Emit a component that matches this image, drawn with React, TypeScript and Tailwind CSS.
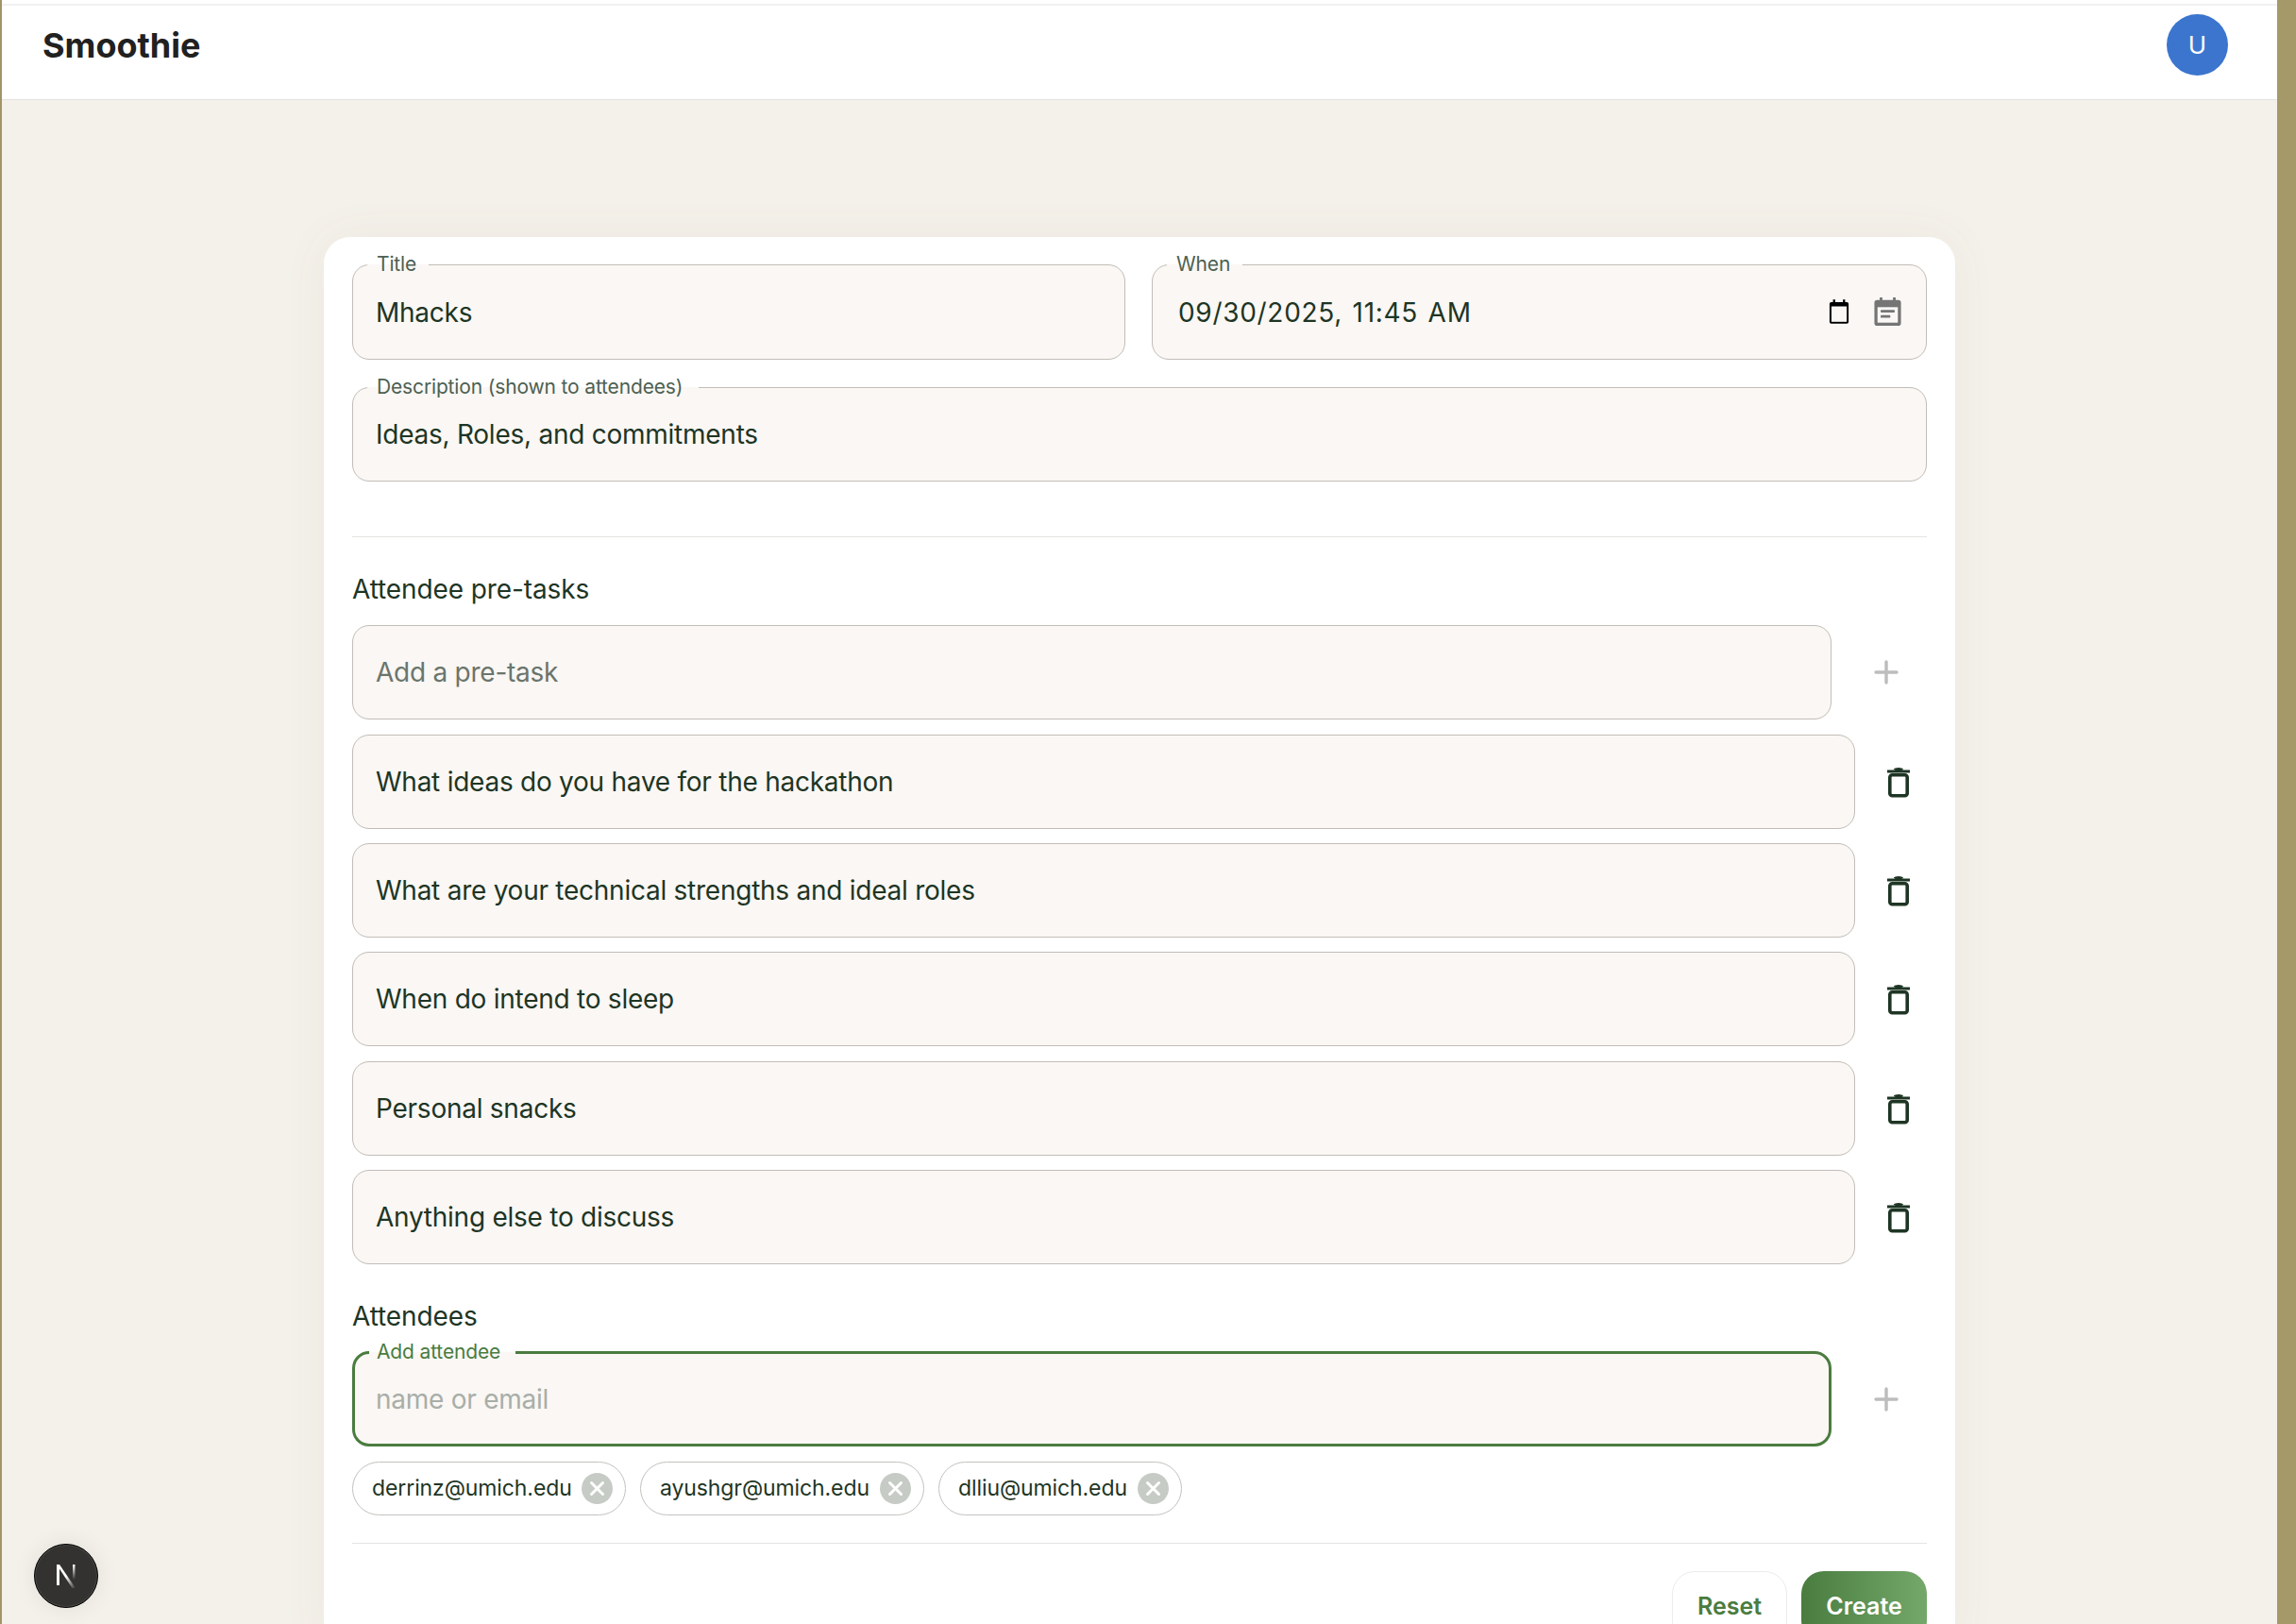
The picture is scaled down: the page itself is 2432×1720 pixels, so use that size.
import React from "react";

const tasks = [
  "What ideas do you have for the hackathon",
  "What are your technical strengths and ideal roles",
  "When do intend to sleep",
  "Personal snacks",
  "Anything else to discuss",
];

const attendees = [
  { email: "derrinz@umich.edu", width: "w-[290px]" },
  { email: "ayushgr@umich.edu", width: "w-[301px]" },
  { email: "dlliu@umich.edu", width: "w-[258px]" },
];

// Outlined box with a notched label, the way the MUI text field draws it
const Field: React.FC<{
  label?: string;
  focused?: boolean;
  className?: string;
  children: React.ReactNode;
}> = ({ label, focused, className = "", children }) => {
  const line = focused ? "border-[3px] border-[#4a7c3f]" : "border border-[#c2bdb8]";
  return (
    <div className={`relative flex items-center rounded-[18px] bg-[#faf7f4] px-[25px] text-[28px] tracking-[-0.25px] text-[#1e3524] ${className}`}>
      <fieldset className={`pointer-events-none absolute inset-x-0 bottom-0 m-0 min-w-0 rounded-[18px] p-0 pl-[15px] ${label ? "-top-[5px]" : "top-0"} ${line}`}>
        {label && (
          <legend className="invisible h-[11px] px-[11px] text-[21.5px] leading-[11px]">
            <span>{label}</span>
          </legend>
        )}
      </fieldset>
      {label && (
        <span className={`absolute left-[26px] top-[-14px] text-[21px] leading-[28px] tracking-[-0.15px] ${focused ? "text-[#4a7c3f]" : "text-[#4d6152]"}`}>
          {label}
        </span>
      )}
      {children}
    </div>
  );
};

const PlusIcon = () => (
  <svg width="28" height="28" viewBox="0 0 28 28" fill="none" stroke="#bdbdbd" strokeWidth="3.4" strokeLinecap="round">
    <path d="M14 3v22M3 14h22" />
  </svg>
);

const TrashIcon = () => (
  <svg width="28" height="34" viewBox="0 0 28 34" fill="none" stroke="#1e3524">
    <path d="M2 6h24" strokeWidth="3" />
    <path d="M10 4.5c1-1.500 7-1.500 8 0" strokeWidth="3" />
    <rect x="4.800" y="9.800" width="18.400" height="22" rx="2.500" strokeWidth="3.600" />
  </svg>
);

const NativeCalendarIcon = () => (
  <svg width="22" height="26" viewBox="0 0 24 28" fill="none" className="mr-[26px]">
    <path d="M5 0h2.500v3h9V0H19v3h2a2 2 0 0 1 2 2v21a2 2 0 0 1-2 2H3a2 2 0 0 1-2-2V5a2 2 0 0 1 2-2h2z" fill="#000" />
    <rect x="3.200" y="8" width="17.600" height="17.800" fill="#faf7f4" />
  </svg>
);

const EventNoteIcon = () => (
  <svg width="29" height="30" viewBox="0 0 30 32" fill="none">
    <path d="M6 0h3v3h12V0h3v3h3a3 3 0 0 1 3 3v23a3 3 0 0 1-3 3H3a3 3 0 0 1-3-3V6a3 3 0 0 1 3-3h3z" fill="#757575" />
    <rect x="3.500" y="11" width="23" height="17.500" fill="#faf7f4" />
    <rect x="7" y="14" width="16" height="3" rx="1" fill="#757575" />
    <rect x="7" y="20" width="11" height="3" rx="1" fill="#757575" />
  </svg>
);

const ChipClose = () => (
  <svg width="33" height="33" viewBox="0 0 33 33">
    <circle cx="16.500" cy="16.500" r="16.500" fill="#c6cbc5" />
    <path d="M10.500 10.500l12 12M22.500 10.500l-12 12" stroke="#fff" strokeWidth="3" strokeLinecap="round" />
  </svg>
);

const NextBadge = () => (
  <div className="absolute bottom-[17px] left-[36px] flex h-[68px] w-[68px] items-center justify-center rounded-full border border-black bg-[#333230] shadow-[0_0_24px_rgba(0,0,0,0.08),inset_0_0_0_1px_#4a4947]">
    <svg width="24" height="26" viewBox="0 0 24 26" fill="none">
      <defs>
        <linearGradient id="nextFade" x1="0" y1="0" x2="1" y2="1">
          <stop offset="0.5" stopColor="#fff" />
          <stop offset="1" stopColor="#fff" stopOpacity="0" />
        </linearGradient>
        <linearGradient id="nextBar" x1="0" y1="0" x2="0" y2="1">
          <stop offset="0" stopColor="#fff" />
          <stop offset="0.8" stopColor="#fff" stopOpacity="0" />
        </linearGradient>
      </defs>
      <path d="M2 1h3v22H2z" fill="#fff" />
      <path d="M2 1h3l17 25h-3.500z" fill="url(#nextFade)" />
      <path d="M19 1h2.500v20H19z" fill="url(#nextBar)" />
    </svg>
  </div>
);

const App: React.FC = () => {
  return (
    <div className="relative flex h-[1720px] w-full overflow-hidden bg-[#f4f1ea] [font-family:Inter,sans-serif]">
      <div className="w-[2px] shrink-0 bg-[#a39468]" />
      <div className="flex min-w-0 flex-1 flex-col">
        <div className="h-[6px] shrink-0 border-b-2 border-[#f1f1f1] bg-white" />
        <header className="flex h-[100px] shrink-0 items-center justify-between border-b border-[#e2e2e0] bg-white pl-[43px] pr-[52px]">
          <h1 className="mb-[16px] text-[36px] font-bold leading-none text-[#212121]">Smoothie</h1>
          <div className="mb-[16px] flex h-[65px] w-[65px] items-center justify-center rounded-full bg-[#3b75ce] text-[26px] text-white">U</div>
        </header>

        <main className="mx-auto mt-[145px] w-[1728px] rounded-t-[28px] bg-white px-[30px] pt-[29px] shadow-[0_0_50px_rgba(120,110,90,0.06)]">
          <div className="flex gap-[28px]">
            <Field label="Title" className="h-[101px] flex-1">Mhacks</Field>
            <Field label="When" className="h-[101px] flex-1 justify-between pr-[27px]">
              <span className="pl-[3px] tracking-[0.7px] [word-spacing:2px]">09/30/2025, 11:45 AM</span>
              <span className="mb-[2px] flex items-center">
                <NativeCalendarIcon />
                <EventNoteIcon />
              </span>
            </Field>
          </div>
          <Field label="Description (shown to attendees)" className="mt-[29px] h-[100px]">Ideas, Roles, and commitments</Field>

          <div className="mt-[58px] h-px bg-[#e4e4e2]" />

          <h2 className="mb-[18px] mt-[35px] text-[28px] font-normal leading-[40px] tracking-[-0.1px] text-[#1e3524]">Attendee pre-tasks</h2>
          <div className="flex gap-[16px]">
            <Field className="h-[100px] flex-1"><span className="text-[#6b756c]">Add a pre-task</span></Field>
            <button className="flex w-[85px] items-center justify-center pr-[2px]"><PlusIcon /></button>
          </div>

          <div className="mt-[16px] flex flex-col gap-[15.2px]">
            {tasks.map((task) => (
              <div key={task} className="flex gap-[16px]">
                <Field className="h-[100px] flex-1">{task}</Field>
                <button className="flex w-[60px] items-center justify-center"><TrashIcon /></button>
              </div>
            ))}
          </div>

          <h2 className="mb-[18px] mt-[35px] text-[28px] font-normal leading-[40px] tracking-[-0.1px] text-[#1e3524]">Attendees</h2>
          <div className="flex gap-[16px]">
            <Field label="Add attendee" focused className="h-[100px] flex-1"><span className="text-[#a8aea8]">name or email</span></Field>
            <button className="flex w-[85px] items-center justify-center pr-[2px]"><PlusIcon /></button>
          </div>

          <div className="mt-[16px] flex gap-[15px]">
            {attendees.map((a) => (
              <div key={a.email} className={`flex h-[57px] items-center justify-between rounded-full border border-[#c2c2be] bg-white pl-[20px] pr-[13px] text-[23px] tracking-[-0.1px] text-[#1e3524] ${a.width}`}>
                <span>{a.email}</span>
                <ChipClose />
              </div>
            ))}
          </div>

          <div className="mt-[29px] h-px bg-[#e4e4e2]" />

          <div className="mt-[29px] flex justify-end gap-[15px]">
            <button className="h-[76px] w-[122px] rounded-[24px] border border-[#ececea] bg-white text-[25px] font-semibold text-[#4a7c3f]">Reset</button>
            <button className="h-[76px] w-[133px] rounded-[24px] bg-gradient-to-r from-[#4a7c3f] to-[#74a86b] text-[25px] font-semibold text-white">Create</button>
          </div>
        </main>
      </div>
      <div className="w-[20px] shrink-0 bg-[#a59869]" />
      <NextBadge />
    </div>
  );
};

export default App;
